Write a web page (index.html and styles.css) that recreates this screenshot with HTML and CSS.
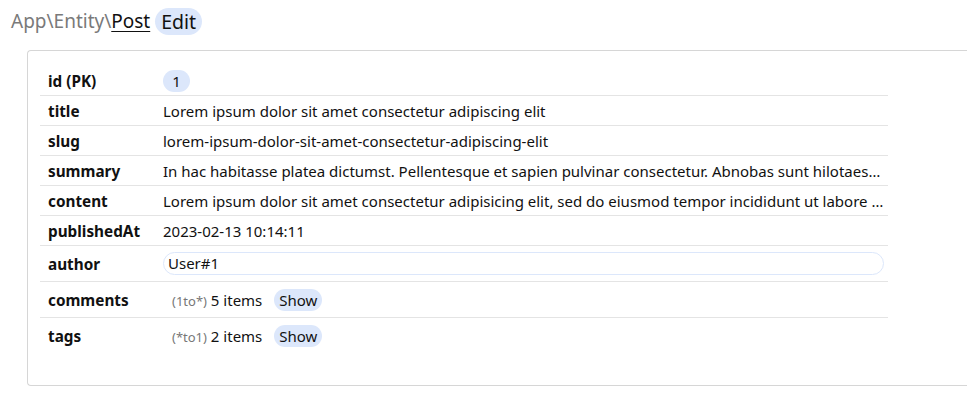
FILE: index.html
```html
<!DOCTYPE html>
<html lang="en">
<head>
<meta charset="utf-8">
<title>App\Entity\Post Edit</title>
<link rel="stylesheet" href="styles.css">
</head>
<body>
<h1 class="title"><span class="ns">App\Entity\</span><a class="cls" href="#">Post</a><span class="pill pill-lg">Edit</span></h1>
<div class="card">
  <table class="props">
    <tr><th>id (PK)</th><td><span class="pill pill-id">1</span></td></tr>
    <tr><th>title</th><td>Lorem ipsum dolor sit amet consectetur adipiscing elit</td></tr>
    <tr><th>slug</th><td>lorem-ipsum-dolor-sit-amet-consectetur-adipiscing-elit</td></tr>
    <tr><th>summary</th><td><div class="ell">In hac habitasse platea dictumst. Pellentesque et sapien pulvinar consectetur. Abnobas sunt hilotaes de placidus vita.</div></td></tr>
    <tr><th>content</th><td><div class="ell">Lorem ipsum dolor sit amet consectetur adipisicing elit, sed do eiusmod tempor incididunt ut labore et dolore magna aliqua.</div></td></tr>
    <tr><th>publishedAt</th><td>2023-02-13 10:14:11</td></tr>
    <tr class="tall"><th>author</th><td><div class="field">User#1</div></td></tr>
    <tr class="tall"><th>comments</th><td><span class="rel"><span class="card-t">(1to*)</span> 5 items <span class="pill">Show</span></span></td></tr>
    <tr class="tall last"><th>tags</th><td><span class="rel"><span class="card-t">(*to1)</span> 2 items <span class="pill">Show</span></span></td></tr>
  </table>
</div>
</body>
</html>
```
FILE: styles.css
```css
html, body { overflow: hidden; }
body {
  margin: 8px;
  font-family: "Noto Sans", "Open Sans", sans-serif;
  color: #111;
  background: #fff;
}
.title {
  margin: 0 0 0 3px;
  font-size: 19px;
  font-weight: normal;
  line-height: 27px;
  display: flex;
  align-items: center;
}
.ns { color: #7a7a7a; }
.cls { color: #111; text-decoration: underline; text-underline-offset: 3px; }
.pill {
  display: inline-block;
  background: #dce7fb;
  border-radius: 14px;
  padding: 0 5px;
  line-height: 22px;
  font-size: 15px;
  text-align: center;
}
.pill-id { min-width: 17px; }
.pill-lg { font-size: 19.5px; line-height: 27px; padding: 0 6px; margin-left: 5px; }
.card {
  margin: 15px -60px 0 19px;
  border: 1px solid #d6d6d6;
  border-right: none;
  border-radius: 4px 0 0 4px;
  padding: 15px 0 32px 12px;
}
.props {
  border-collapse: collapse;
  width: 848px;
  table-layout: fixed;
  font-size: 15px;
}
.props th {
  width: 115px;
  text-align: left;
  font-weight: bold;
  font-size: 15.3px;
  padding: 0 0 0 8px;
  height: 29px;
  border-bottom: 1px solid #e4e4e4;
}
.props td {
  padding: 0 4px 0 0;
  height: 29px;
  border-bottom: 1px solid #e4e4e4;
  white-space: nowrap;
}
.props tr.tall th, .props tr.tall td { height: 35px; }
.props tr.last th, .props tr.last td { border-bottom: none; }
.ell { overflow: hidden; text-overflow: ellipsis; white-space: nowrap; }
.field {
  border: 1px solid #dce7fb;
  border-radius: 12px;
  line-height: 21px;
  padding: 0 4px;
}
.rel { padding-left: 9px; }
.card-t { color: #777; font-size: 13px; }
.rel .pill { margin-left: 8px; }
```
